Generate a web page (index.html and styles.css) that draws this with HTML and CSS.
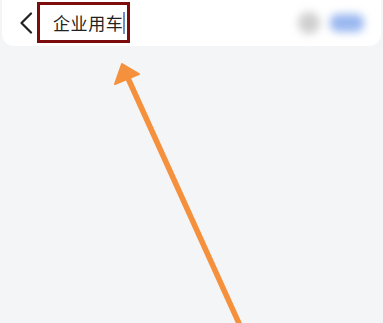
FILE: index.html
```html
<!DOCTYPE html>
<html lang="zh">
<head>
<meta charset="utf-8">
<link rel="stylesheet" href="styles.css">
</head>
<body>
<div class="page">
  <header class="bar">
    <svg class="back" width="14" height="22" viewBox="0 0 14 22"><path d="M12 1.5 L2.5 11 L12 20.5" fill="none" stroke="#222" stroke-width="2.2" stroke-linecap="round" stroke-linejoin="round"/></svg>
    <div class="search">
      <span class="query">企业用车</span><span class="caret"></span>
    </div>
    <div class="spacer"></div>
    <div class="blur-dot"></div>
    <div class="blur-pill"></div>
  </header>
  <svg class="arrow" width="383" height="323" viewBox="0 0 383 323">
    <line x1="242" y1="330" x2="127" y2="76" stroke="#f5913d" stroke-width="5.5" stroke-linecap="round"/>
    <polygon points="122,64 139,74 115,84" fill="#f5913d" stroke="#f5913d" stroke-width="2" stroke-linejoin="round"/>
  </svg>
</div>
</body>
</html>
```
FILE: styles.css
```css
html, body {
  margin: 0;
  padding: 0;
}
body {
  background: #f3f5f7;
  font-family: "Noto Sans CJK SC", "Noto Sans", sans-serif;
  width: 383px;
  height: 323px;
  overflow: hidden;
}
.page {
  position: relative;
  width: 383px;
  height: 323px;
}
.bar {
  height: 46px;
  margin: 0 2px;
  background: #ffffff;
  border-radius: 0 0 12px 12px;
  display: flex;
  align-items: center;
  box-sizing: border-box;
  padding-left: 17px;
  padding-right: 17px;
}
.back {
  display: block;
  flex: none;
}
.search {
  margin-left: 4px;
  margin-top: 2px;
  align-self: flex-start;
  width: 93px;
  height: 41px;
  box-sizing: border-box;
  border: 3px solid #7d0c0c;
  display: flex;
  align-items: center;
  padding-left: 13px;
}
.query {
  font-size: 17px;
  color: #222;
  letter-spacing: 0.6px;
  line-height: 1;
}
.caret {
  display: inline-block;
  width: 2px;
  height: 22px;
  background: #6b8fc9;
}
.spacer {
  flex: 1;
}
.blur-dot {
  width: 22px;
  height: 22px;
  border-radius: 50%;
  background: #cfcfcf;
  filter: blur(4px);
  margin-right: 10px;
}
.blur-pill {
  width: 34px;
  height: 18px;
  border-radius: 8px;
  background: #9ab8f0;
  filter: blur(4px);
}
.arrow {
  position: absolute;
  left: 0;
  top: 0;
  pointer-events: none;
}
```
